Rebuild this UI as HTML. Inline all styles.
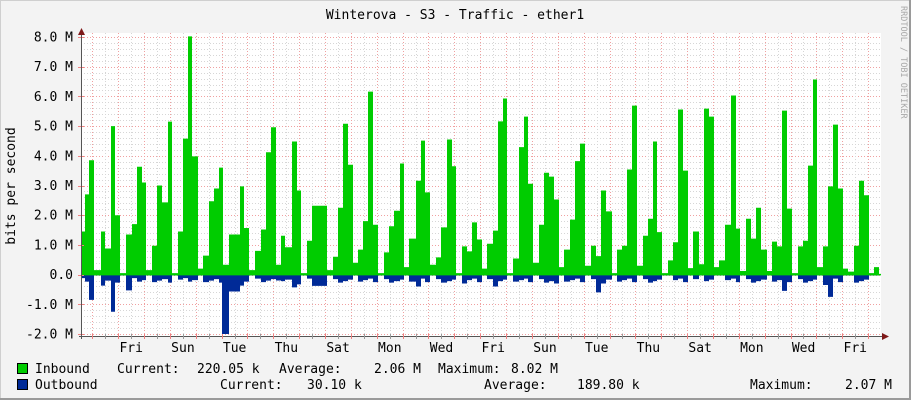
<!DOCTYPE html>
<html><head><meta charset="utf-8">
<style>
html,body{margin:0;padding:0;background:#f3f3f3;}
svg{display:block;}
text{font-family:"DejaVu Sans Mono","Liberation Mono",monospace;fill:#000;}
</style></head>
<body>
<svg id="g" width="911" height="400" xmlns="http://www.w3.org/2000/svg">
<rect x="0" y="0" width="911" height="400" fill="#f3f3f3"/>
<rect x="0.5" y="0.5" width="909" height="398" fill="none" stroke="#cfcfcf" stroke-width="1"/>
<line x1="910" y1="0" x2="910" y2="400" stroke="#9a9a9a" stroke-width="2"/>
<line x1="0" y1="399" x2="911" y2="399" stroke="#9a9a9a" stroke-width="2"/>
<rect x="81" y="33" width="800" height="304" fill="#fff"/>
<g id="grid"></g>
<g id="data"></g>
<g id="axes"></g>
<text x="455" y="19" font-size="13" text-anchor="middle">Winterova - S3 - Traffic - ether1</text>
<text transform="translate(15,186) rotate(-90)" font-size="13" text-anchor="middle">bits per second</text>
<text transform="translate(901,6) rotate(90)" font-size="8.5" fill="#aaa" style="fill:#a8a8a8">RRDTOOL / TOBI OETIKER</text>
<g font-size="13">
<rect x="17.5" y="363.5" width="10" height="10" fill="#00cc00" stroke="#000"/>
<rect x="17.5" y="379.5" width="10" height="10" fill="#002a97" stroke="#000"/>
<text x="35" y="373">Inbound</text>
<text x="117" y="373">Current:</text>
<text x="197" y="373">220.05 k</text>
<text x="279" y="373">Average:</text>
<text x="374" y="373">2.06 M</text>
<text x="438" y="373">Maximum:</text>
<text x="511" y="373">8.02 M</text>
<text x="35" y="389">Outbound</text>
<text x="220" y="389">Current:</text>
<text x="307" y="389">30.10 k</text>
<text x="484" y="389">Average:</text>
<text x="577" y="389">189.80 k</text>
<text x="750" y="389">Maximum:</text>
<text x="845" y="389">2.07 M</text>
</g>
</svg>
<script>
var NS="http://www.w3.org/2000/svg";
function el(p,t,a,txt){var e=document.createElementNS(NS,t);for(var k in a)e.setAttribute(k,a[k]);if(txt!=null)e.textContent=txt;p.appendChild(e);return e;}
var Z=274.6,S=29.7;function Y(v){return Z-v*S;}
var grid=document.getElementById('grid'),data=document.getElementById('data'),axes=document.getElementById('axes');
// horizontal grid
for(var i=-10;i<=40;i++){var v=i*0.2,y=Math.round(Y(v))+0.5;var maj=(i%5==0);
el(grid,'line',{x1:81,y1:y,x2:881,y2:y,stroke:maj?'#f0a0a0':'#d6d6d6','stroke-dasharray':'1,2','stroke-width':1});}
// vertical grid
for(var k=-1;k<=61;k++){var x=92.3+k*12.93;if(x<82||x>881)continue;x=Math.round(x)+0.5;
el(grid,'line',{x1:x,y1:33,x2:x,y2:337,stroke:(k%2==0)?'#f0a0a0':'#d6d6d6','stroke-dasharray':'1,2','stroke-width':1});}
// y labels
var yl=[[8,'8.0 M'],[7,'7.0 M'],[6,'6.0 M'],[5,'5.0 M'],[4,'4.0 M'],[3,'3.0 M'],[2,'2.0 M'],[1,'1.0 M'],[0,'0.0'],[-1,'-1.0 M'],[-2,'-2.0 M']];
yl.forEach(function(a){el(axes,'text',{x:73,y:Y(a[0])+4.5,'font-size':13,'text-anchor':'end'},a[1]);
el(axes,'line',{x1:78,y1:Math.round(Y(a[0]))+0.5,x2:84,y2:Math.round(Y(a[0]))+0.5,stroke:'#f08080'});});
// day labels
var days=['Fri','Sun','Tue','Thu','Sat','Mon','Wed','Fri','Sun','Tue','Thu','Sat','Mon','Wed','Fri'];
days.forEach(function(d,i){el(axes,'text',{x:131.2+i*51.72,y:352,'font-size':13,'text-anchor':'middle'},d);});
// inbound data [x0,x1,v]
var G=[[81,85,1.45],[85,89,2.7],[89,94,3.85],[94,101,0.15],[101,105,1.45],[105,111,0.88],[111,115,5.0],[115,120,2.0],[120,126,0.05],[126,132,1.35],[132,137,1.7],[137,142,3.63],[142,146,3.1],[146,152,0.15],[152,157,0.97],[157,162,3.0],[162,168,2.43],[168,172,5.15],[172,178,0.05],[178,183,1.45],[183,188,4.58],[188,192,8.02],[192,198,3.98],[198,203,0.2],[203,209,0.64],[209,214,2.47],[214,219,2.9],[219,223,3.6],[223,229,0.33],[229,240,1.35],[240,244,2.97],[244,249,1.57],[249,255,0.15],[255,261,0.8],[261,266,1.52],[266,271,4.12],[271,276,4.96],[276,281,0.33],[281,285,1.31],[285,292,0.92],[292,297,4.48],[297,301,2.83],[301,307,0.05],[307,312,1.14],[312,327,2.32],[327,333,0.15],[333,338,0.6],[338,343,2.25],[343,348,5.08],[348,353,3.7],[353,358,0.4],[358,363,0.84],[363,368,1.8],[368,373,6.16],[373,378,1.68],[378,384,0.05],[384,389,0.75],[389,394,1.63],[394,400,2.15],[400,404,3.74],[404,409,0.25],[409,416,1.21],[416,421,3.16],[421,425,4.51],[425,430,2.77],[430,436,0.33],[436,441,0.58],[441,447,1.59],[447,452,4.55],[452,456,3.65],[456,462,0.05],[462,467,0.95],[467,472,0.78],[472,477,1.76],[477,482,1.18],[482,487,0.2],[487,493,1.04],[493,498,1.48],[498,503,5.16],[503,507,5.93],[507,513,0.05],[513,519,0.54],[519,524,4.29],[524,528,5.32],[528,533,3.06],[533,539,0.4],[539,544,1.68],[544,549,3.43],[549,554,3.3],[554,559,2.53],[559,564,0.25],[564,570,0.84],[570,575,1.85],[575,580,3.82],[580,585,4.41],[585,591,0.3],[591,596,0.97],[596,601,0.62],[601,606,2.83],[606,612,2.13],[612,617,0.05],[617,622,0.84],[622,627,0.97],[627,632,3.54],[632,637,5.69],[637,643,0.3],[643,648,1.31],[648,653,1.88],[653,657,4.48],[657,662,1.43],[662,668,0.05],[668,673,0.48],[673,678,1.09],[678,683,5.56],[683,688,3.5],[688,693,0.22],[693,699,1.45],[699,704,0.35],[704,709,5.59],[709,714,5.32],[714,719,0.25],[719,725,0.48],[725,731,1.68],[731,736,6.03],[736,740,1.55],[740,746,0.12],[746,751,1.88],[751,756,1.21],[756,761,2.25],[761,767,0.84],[767,772,0.12],[772,777,1.11],[777,782,0.95],[782,787,5.52],[787,792,2.22],[792,798,0.05],[798,803,0.95],[803,808,1.14],[808,813,3.67],[813,817,6.57],[817,823,0.25],[823,828,0.95],[828,833,2.97],[833,838,5.05],[838,843,2.9],[843,848,0.2],[848,854,0.1],[854,859,0.97],[859,864,3.16],[864,869,2.67],[869,874,0.05],[874,879,0.25]];
var spikes={84:0.37,89:0.85,101:0.37,111:1.25,115:0.27,126:0.53,222:2.0,223:2.0,229:0.57,240:0.37,276:0.2,292:0.43,297:0.33,312:0.38,416:0.4,462:0.3,493:0.4,554:0.3,596:0.6,601:0.3,778:0.5,782:0.55,823:0.35,828:0.75};
var gp='M81,'+Z,bp='M81,'+Z;
G.forEach(function(b,i){var y=Y(b[2]);gp+=' L'+b[0]+','+y+' L'+b[1]+','+y;
var o=spikes[b[0]];if(o==null){o=b[2]>0.5?0.12+((i*37)%10)/60:0.03;}
var yb=Z+o*S;bp+=' L'+b[0]+','+yb+' L'+b[1]+','+yb;});
// Tue big spike
gp+=' L879,'+Z+' Z';bp+=' L879,'+Z+' Z';
el(data,'path',{d:bp,fill:'#002a97'});
el(data,'path',{d:'M222,'+Z+' L222,'+Y(-2.0)+' L228,'+Y(-2.0)+' L228,'+Z+' Z',fill:'#002a97'});
el(data,'path',{d:gp,fill:'#00cc00'});
el(data,'line',{x1:81,y1:Z,x2:881,y2:Z,stroke:'#00cc00','stroke-width':1.5});
// axes
el(axes,'line',{x1:81.5,y1:30,x2:81.5,y2:339,stroke:'#555'});
el(axes,'line',{x1:79,y1:336.5,x2:884,y2:336.5,stroke:'#555'});
el(axes,'path',{d:'M78,35 L85,35 L81.5,28 Z',fill:'#7f1a1a'});
el(axes,'path',{d:'M882,333 L882,340 L889,336.5 Z',fill:'#7f1a1a'});
for(var k=-1;k<=61;k++){var x=92.3+k*12.93;if(x<82||x>881)continue;x=Math.round(x)+0.5;
el(axes,'line',{x1:x,y1:334,x2:x,y2:339,stroke:(k%2==0)?'#f08080':'#999'});}
</script>
</body></html>
